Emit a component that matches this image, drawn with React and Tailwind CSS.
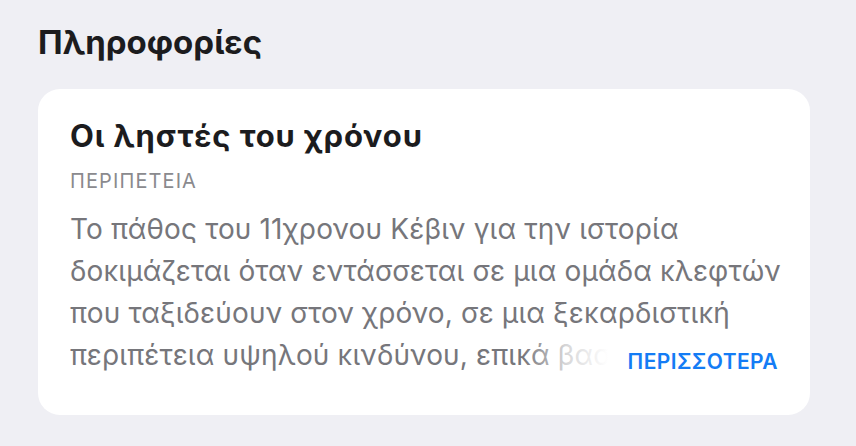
import React from "react";

const lines = [
  "Το πάθος του 11χρονου Κέβιν για την ιστορία",
  "δοκιμάζεται όταν εντάσσεται σε μια ομάδα κλεφτών",
  "που ταξιδεύουν στον χρόνο, σε μια ξεκαρδιστική",
];

export default function App() {
  return (
    <div
      className="w-full min-h-screen bg-[#efeff4] pl-[38px] pr-[46px] pt-[22px]"
      style={{ fontFamily: "Inter, 'Noto Sans', sans-serif" }}
    >
      {/* κεφαλίδα ενότητας */}
      <h2 className="text-[33px] leading-[40px] font-bold text-[#1c1c1e]">
        Πληροφορίες
      </h2>

      {/* κάρτα */}
      <div className="mt-[27px] bg-white rounded-[22px] px-[32px] pt-[28px] pb-[39px]">
        <h3 className="text-[31px] leading-[38px] font-bold text-[#1c1c1e] tracking-[0.9px]">
          Οι ληστές του χρόνου
        </h3>
        <p className="mt-[14px] text-[20px] leading-[24px] text-[#8a8a8e] tracking-[1.1px]">
          ΠΕΡΙΠΕΤΕΙΑ
        </p>

        <div className="mt-[15px] text-[28px] leading-[42px] text-[#76767b] tracking-[0.15px]">
          {lines.map((l) => (
            <div key={l} className="whitespace-nowrap">{l}</div>
          ))}
          <div className="flex items-center gap-[20px]">
            <div className="relative overflow-hidden whitespace-nowrap flex-1 min-w-0">
              περιπέτεια υψηλού κινδύνου, επικά βασανιστική
              <div className="absolute top-0 right-0 h-full w-[85px] bg-gradient-to-r from-white/0 via-white/70 to-white" />
            </div>
            <button className="shrink-0 mt-[14px] text-[21px] leading-[26px] font-semibold text-[#147cf5] tracking-[0.4px]">
              ΠΕΡΙΣΣΟΤΕΡΑ
            </button>
          </div>
        </div>
      </div>
    </div>
  );
}
